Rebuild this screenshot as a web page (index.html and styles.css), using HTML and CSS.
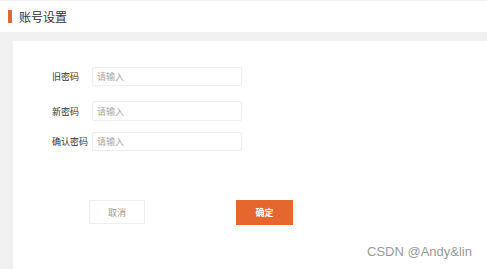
FILE: index.html
```html
<!DOCTYPE html>
<html lang="zh">
<head>
<meta charset="utf-8">
<title>账号设置</title>
<link rel="stylesheet" href="styles.css">
</head>
<body>
<div class="header">
  <span class="bar"></span>
  <span class="title">账号设置</span>
</div>
<div class="main">
  <div class="form">
    <div class="row row-1">
      <label class="label">旧密码</label>
      <input class="input" type="password" placeholder="请输入">
    </div>
    <div class="row row-2">
      <label class="label">新密码</label>
      <input class="input" type="password" placeholder="请输入">
    </div>
    <div class="row">
      <label class="label">确认密码</label>
      <input class="input" type="password" placeholder="请输入">
    </div>
  </div>
  <div class="actions">
    <button class="btn btn-cancel">取消</button>
    <button class="btn btn-ok">确定</button>
  </div>
</div>
<div class="watermark">CSDN @Andy&amp;lin</div>
</body>
</html>
```
FILE: styles.css
```css
html, body {
  margin: 0;
  padding: 0;
  height: 100%;
}
body {
  background: #f0f0f0;
  font-family: "Noto Sans CJK SC", "Noto Sans", sans-serif;
  color: #333;
  overflow: hidden;
  position: relative;
}
.header {
  margin-top: 1px;
  height: 31px;
  background: #fff;
  display: flex;
  align-items: center;
  padding-left: 8px;
}
.bar {
  width: 4px;
  height: 13px;
  background: #e5672f;
  margin-right: 7px;
}
.title {
  font-size: 12px;
  color: #333;
  line-height: 1;
}
.main {
  margin: 9px 0 0 13px;
  background: #fff;
  height: calc(100% - 41px);
  padding: 26px 0 0 39px;
  box-sizing: border-box;
}
.row {
  display: flex;
  align-items: center;
  height: 19px;
}
.row-1 { margin-bottom: 15px; }
.row-2 { margin-bottom: 11px; height: 20px; }
.label {
  width: 40px;
  font-size: 9px;
  color: #333;
}
.input {
  width: 150px;
  height: 100%;
  box-sizing: border-box;
  border: 1px solid #eeeeee;
  border-radius: 2px;
  padding: 0 0 0 4px;
  margin: 0;
  font-size: 9px;
  font-family: inherit;
  outline: none;
}
.input::placeholder {
  color: #a8a8a8;
}
.actions {
  display: flex;
  margin: 49px 0 0 37px;
  gap: 91px;
}
.btn {
  font-family: inherit;
  font-size: 9px;
  margin: 0;
  padding: 0;
  cursor: pointer;
}
.btn-cancel {
  width: 56px;
  height: 24px;
  background: #fff;
  border: 1px solid #eeeeee;
  color: #999;
}
.btn-ok {
  width: 57px;
  height: 25px;
  background: #e5672f;
  border: none;
  color: #fff;
  font-weight: bold;
}
.watermark {
  position: absolute;
  left: 367px;
  top: 244px;
  font-family: "Liberation Sans", Arial, sans-serif;
  font-size: 13px;
  line-height: 15px;
  color: #9a9a9a;
}
```
